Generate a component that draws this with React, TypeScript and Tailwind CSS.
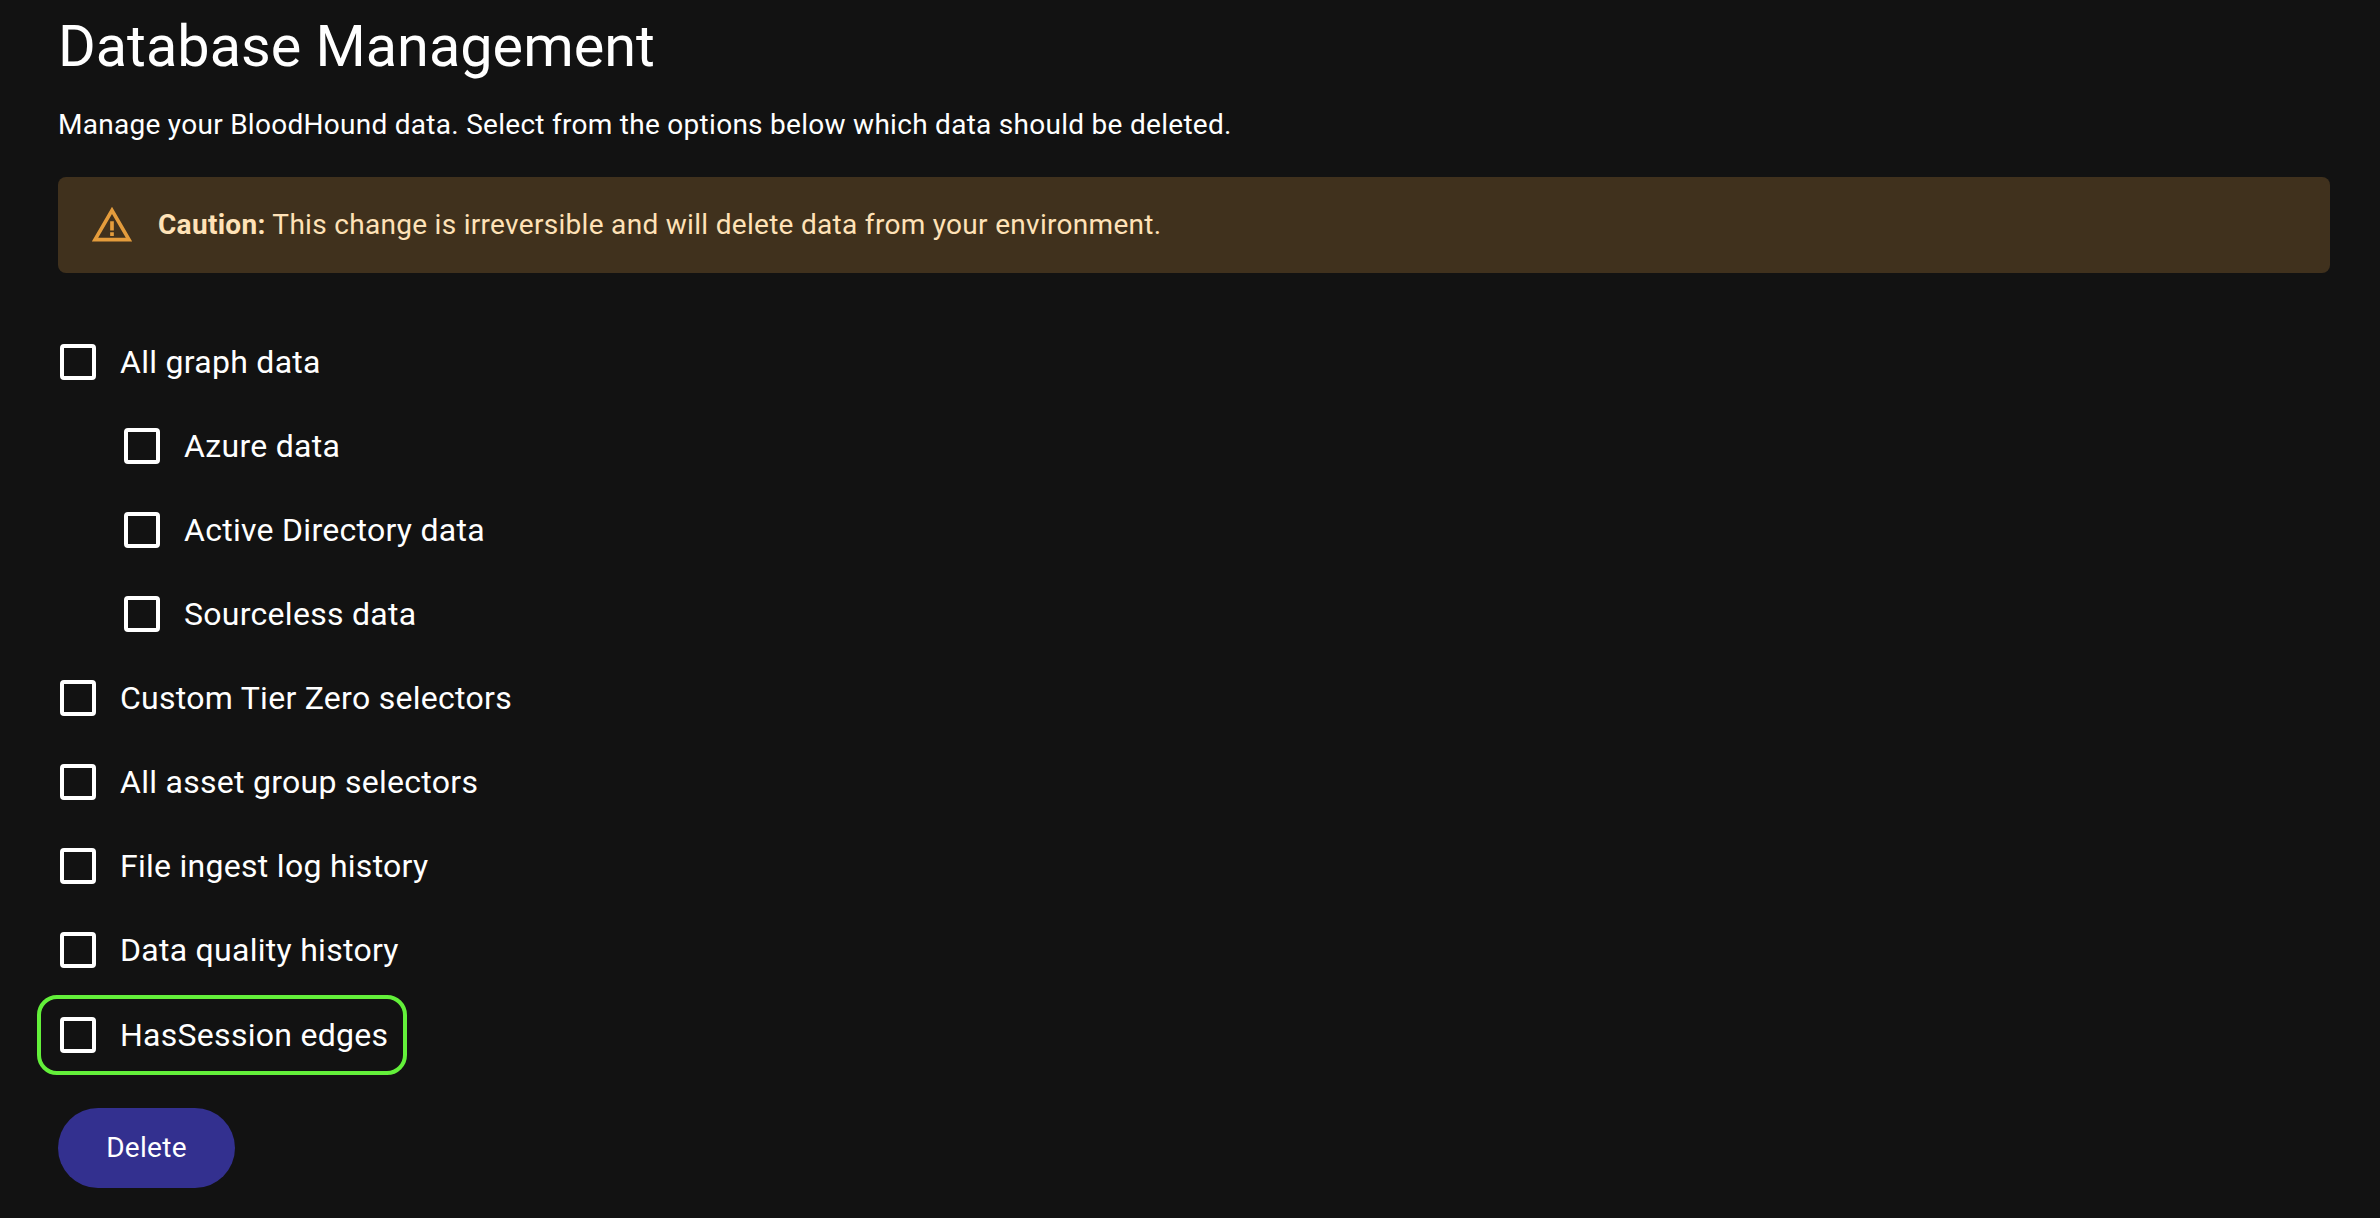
const rows = [
  { label: 'All graph data' },
  { label: 'Azure data', nested: true },
  { label: 'Active Directory data', nested: true },
  { label: 'Sourceless data', nested: true },
  { label: 'Custom Tier Zero selectors' },
  { label: 'All asset group selectors' },
  { label: 'File ingest log history' },
  { label: 'Data quality history' },
];

function Checkbox() {
  return <span className="h-[36px] w-[36px] rounded-[4px] border-[4px] border-white" />;
}

function Row({ label, nested }: { label: string; nested?: boolean }) {
  return (
    <div className={`flex h-[84px] items-center pl-[2px] ${nested ? 'ml-[64px]' : ''}`}>
      <Checkbox />
      <span className="ml-[24px] text-[32px] tracking-[0.28px] text-white">{label}</span>
    </div>
  );
}

export default function App() {
  return (
    <div className="h-[1218px] w-[2380px] overflow-hidden bg-[#121212] pl-[58px] pr-[50px] font-['Roboto',sans-serif] text-white">
      <h1 className="pt-[12px] text-[57.6px] leading-[70px]">Database Management</h1>
      <p className="mt-[25px] text-[28px] leading-[36px] tracking-[0.28px]">
        Manage your BloodHound data. Select from the options below which data should be deleted.
      </p>
      <div className="mt-[34px] flex h-[96px] items-center rounded-[8px] bg-[#40311d] pl-[32px] text-[28px] tracking-[0.3px] text-[#ffe2b7]">
        <svg viewBox="0 0 24 24" className="h-[44px] w-[44px] fill-[#e49c3c]">
          <path d="M12 5.99 19.53 19H4.47L12 5.99M12 2 1 21h22L12 2z" />
          <path d="M13 16h-2v2h2zM13 10h-2v5h2z" />
        </svg>
        <span className="ml-[24px]">
          <b className="font-bold">Caution:</b> This change is irreversible and will delete data from your environment.
        </span>
      </div>
      <div className="mt-[47px]">
        {rows.map((r) => (
          <Row key={r.label} label={r.label} nested={r.nested} />
        ))}
        <div className="mt-[3px] -ml-[21px] flex h-[80px] w-[370px] items-center rounded-[20px] border-[4px] border-[#63f03a] pl-[19px]">
          <Checkbox />
          <span className="ml-[24px] text-[32px] tracking-[0.28px] text-white">HasSession edges</span>
        </div>
      </div>
      <button className="mt-[33px] flex h-[80px] w-[177px] items-center justify-center rounded-full bg-[#33308f] text-[28px] tracking-[0.3px] text-white">
        Delete
      </button>
    </div>
  );
}
